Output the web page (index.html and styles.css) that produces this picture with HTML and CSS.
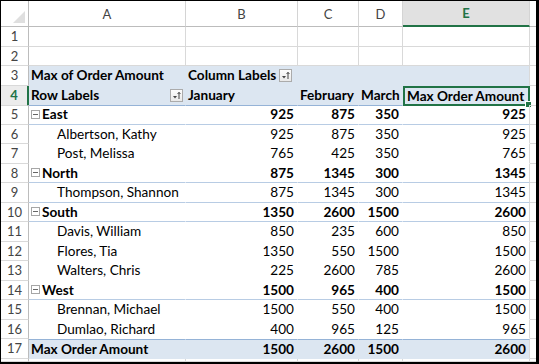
FILE: index.html
```html
<!DOCTYPE html>
<html>
<head>
<meta charset="utf-8">
<link rel="stylesheet" href="styles.css">
</head>
<body>
<div class="frame">
  <div class="sheet">
    <div class="row head">
      <div class="c rh corner"><span class="tri"></span></div>
      <div class="c ch">A</div>
      <div class="c ch">B</div>
      <div class="c ch">C</div>
      <div class="c ch">D</div>
      <div class="c ch sel">E</div>
      <div class="c ch last"></div>
    </div>
    <div class="row"><div class="c rh">1</div><div class="c"></div><div class="c"></div><div class="c"></div><div class="c"></div><div class="c"></div><div class="c last"></div></div>
    <div class="row"><div class="c rh">2</div><div class="c"></div><div class="c"></div><div class="c"></div><div class="c"></div><div class="c"></div><div class="c last"></div></div>
    <div class="row pv-top">
      <div class="c rh">3</div>
      <div class="c p b">Max of Order Amount</div>
      <div class="c p b flt">Column Labels <span class="fbtn"><svg width="11" height="11" viewBox="0 0 11 11"><path d="M2 6h4l-2 2.5z" fill="#444"/><path d="M8 9V2.5M6.6 4 8 2.3 9.4 4" stroke="#444" stroke-width="1" fill="none"/></svg></span></div>
      <div class="c p"></div>
      <div class="c p"></div>
      <div class="c p"></div>
      <div class="c last"></div>
    </div>
    <div class="row pv-hdr">
      <div class="c rh rsel">4</div>
      <div class="c p b fltend"><span>Row Labels</span><span class="fbtn"><svg width="11" height="11" viewBox="0 0 11 11"><path d="M2 6h4l-2 2.5z" fill="#444"/><path d="M8 9V2.5M6.6 4 8 2.3 9.4 4" stroke="#444" stroke-width="1" fill="none"/></svg></span></div>
      <div class="c p b">January</div>
      <div class="c p b">February</div>
      <div class="c p b">March</div>
      <div class="c p b active">Max Order Amount<span class="handle"></span></div>
      <div class="c last"></div>
    </div>
    <div class="row grp">
      <div class="c rh">5</div>
      <div class="c p b"><span class="mn"></span>East</div>
      <div class="c p b n">925</div><div class="c p b n">875</div><div class="c p b n">350</div><div class="c p b n">925</div>
      <div class="c last"></div>
    </div>
    <div class="row item">
      <div class="c rh">6</div>
      <div class="c p ind">Albertson, Kathy</div>
      <div class="c p n">925</div><div class="c p n">875</div><div class="c p n">350</div><div class="c p n">925</div>
      <div class="c last"></div>
    </div>
    <div class="row item">
      <div class="c rh">7</div>
      <div class="c p ind">Post, Melissa</div>
      <div class="c p n">765</div><div class="c p n">425</div><div class="c p n">350</div><div class="c p n">765</div>
      <div class="c last"></div>
    </div>
    <div class="row grp">
      <div class="c rh">8</div>
      <div class="c p b"><span class="mn"></span>North</div>
      <div class="c p b n">875</div><div class="c p b n">1345</div><div class="c p b n">300</div><div class="c p b n">1345</div>
      <div class="c last"></div>
    </div>
    <div class="row item lined">
      <div class="c rh">9</div>
      <div class="c p ind">Thompson, Shannon</div>
      <div class="c p n">875</div><div class="c p n">1345</div><div class="c p n">300</div><div class="c p n">1345</div>
      <div class="c last"></div>
    </div>
    <div class="row grp">
      <div class="c rh">10</div>
      <div class="c p b"><span class="mn"></span>South</div>
      <div class="c p b n">1350</div><div class="c p b n">2600</div><div class="c p b n">1500</div><div class="c p b n">2600</div>
      <div class="c last"></div>
    </div>
    <div class="row item">
      <div class="c rh">11</div>
      <div class="c p ind">Davis, William</div>
      <div class="c p n">850</div><div class="c p n">235</div><div class="c p n">600</div><div class="c p n">850</div>
      <div class="c last"></div>
    </div>
    <div class="row item">
      <div class="c rh">12</div>
      <div class="c p ind">Flores, Tia</div>
      <div class="c p n">1350</div><div class="c p n">550</div><div class="c p n">1500</div><div class="c p n">1500</div>
      <div class="c last"></div>
    </div>
    <div class="row item">
      <div class="c rh">13</div>
      <div class="c p ind">Walters, Chris</div>
      <div class="c p n">225</div><div class="c p n">2600</div><div class="c p n">785</div><div class="c p n">2600</div>
      <div class="c last"></div>
    </div>
    <div class="row grp">
      <div class="c rh">14</div>
      <div class="c p b"><span class="mn"></span>West</div>
      <div class="c p b n">1500</div><div class="c p b n">965</div><div class="c p b n">400</div><div class="c p b n">1500</div>
      <div class="c last"></div>
    </div>
    <div class="row item">
      <div class="c rh">15</div>
      <div class="c p ind">Brennan, Michael</div>
      <div class="c p n">1500</div><div class="c p n">550</div><div class="c p n">400</div><div class="c p n">1500</div>
      <div class="c last"></div>
    </div>
    <div class="row item">
      <div class="c rh">16</div>
      <div class="c p ind">Dumlao, Richard</div>
      <div class="c p n">400</div><div class="c p n">965</div><div class="c p n">125</div><div class="c p n">965</div>
      <div class="c last"></div>
    </div>
    <div class="row total">
      <div class="c rh">17</div>
      <div class="c p b">Max Order Amount</div>
      <div class="c p b n">1500</div><div class="c p b n">2600</div><div class="c p b n">1500</div><div class="c p b n">2600</div>
      <div class="c last"></div>
    </div>
    <div class="row tail"><div class="c rh"></div><div class="c"></div><div class="c"></div><div class="c"></div><div class="c"></div><div class="c"></div><div class="c last"></div></div>
  </div>
</div>
</body>
</html>
```
FILE: styles.css
```css
html, body { margin: 0; padding: 0; background: #fff; }
.frame {
  width: 539px; height: 364px; box-sizing: border-box;
  border-style: solid; border-color: #000;
  border-width: 1px 3px 2px 1px;
  overflow: hidden; background: #fff;
}
.sheet {
  font-family: Lato, "Liberation Sans", sans-serif;
  font-size: 13.6px; color: #000;
  display: grid;
  grid-template-rows: 26px repeat(17, 19.5px) 1fr;
  height: 100%;
}
.row {
  display: grid;
  grid-template-columns: 28px 157px 112px 61px 44px 127px 1fr;
}
.c {
  box-sizing: border-box;
  border-right: 1px solid #d9d9d9;
  border-bottom: 1px solid #d9d9d9;
  white-space: nowrap; overflow: hidden;
  display: flex; align-items: center;
  padding: 0 2px;
  position: relative;
}
.c.last { border-right: none; }
.rh {
  justify-content: center; color: #444; font-size: 13px;
  border-right-color: #bcbcbc; padding: 0;
}
.head .c { border-bottom-color: #bcbcbc; justify-content: center; color: #444; font-size: 13px; }
.head .ch { border-right-color: #d4d4d4; }
.head .sel { background: #e1e1e1; color: #217346; font-weight: bold; border-bottom: 2px solid #217346; }
.corner { position: relative; }
.tri {
  position: absolute; right: 3px; bottom: 3px;
  width: 0; height: 0;
  border-left: 12px solid transparent;
  border-bottom: 12px solid #dfdfdf;
}
.rsel { color: #217346; font-weight: bold; background: #ececec; border-right: 2px solid #217346; }
.b { font-weight: bold; }
.n { justify-content: flex-end; padding-right: 3px; }
.ind { padding-left: 28px; }

/* pivot styling */
.p { border-right-color: transparent; border-bottom-color: transparent; }
.row .p:nth-child(6) { border-right-color: #d9d9d9; }
.pv-top .p, .pv-hdr .p { background: #dce6f1; }
.pv-hdr .p { border-bottom: 1px solid #95b3d7; }
.grp .p, .lined .p { border-bottom: 1px solid #b8cce4; }
.total .p { background: #dce6f1; border-top: 1px solid #95b3d7; }
.row .p.active { border: 2px solid #217346; padding-left: 2px; overflow: visible; }

.flt { gap: 3px; }
.fltend { justify-content: space-between; padding-right: 2px; }
.fbtn {
  display: inline-flex; width: 13px; height: 13px; box-sizing: border-box;
  border: 1px solid #ababab; background: linear-gradient(#fdfdfd, #e9e9e9);
  align-items: center; justify-content: center;
}
.mn {
  display: inline-block; width: 9px; height: 9px; box-sizing: border-box;
  border: 1px solid #a6a6a6; margin-right: 2px; position: relative; background: #fff;
}
.mn::after {
  content: ""; position: absolute; left: 1px; right: 1px; top: 3px; height: 1px; background: #666;
}
.handle {
  position: absolute; right: -4px; bottom: -4px; width: 5px; height: 5px;
  background: #217346; border: 1px solid #fff;
}
```
